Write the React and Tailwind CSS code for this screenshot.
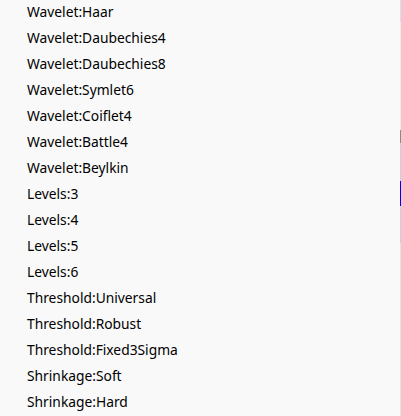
const items = [
  'Wavelet:Haar',
  'Wavelet:Daubechies4',
  'Wavelet:Daubechies8',
  'Wavelet:Symlet6',
  'Wavelet:Coiflet4',
  'Wavelet:Battle4',
  'Wavelet:Beylkin',
  'Levels:3',
  'Levels:4',
  'Levels:5',
  'Levels:6',
  'Threshold:Universal',
  'Threshold:Robust',
  'Threshold:Fixed3Sigma',
  'Shrinkage:Soft',
  'Shrinkage:Hard',
]

export default function App() {
  return (
    <div className="w-[401px] h-[416px] bg-[#f9f9f9] flex overflow-hidden">
      {/* menu list */}
      <div className="flex-1 -mt-px">
        {items.map((label) => (
          <div
            key={label}
            className="h-[26px] flex items-center pl-[27px] text-[13.8px] text-black"
            style={{ fontFamily: '"Noto Sans", "Open Sans", sans-serif' }}
          >
            {label}
          </div>
        ))}
      </div>

      {/* scrollbar edge */}
      <div className="w-px flex flex-col">
        <div className="h-[22px] bg-[#cfe5e8]" />
        <div className="h-[108px] bg-[#ececec]" />
        <div className="h-[13px] bg-[#8a8a8a]" />
        <div className="h-[38px] bg-[#c9d3de]" />
        <div className="h-[25px] bg-[#0000ff]" />
        <div className="h-[37px] bg-[#c9d3de]" />
        <div className="flex-1 bg-[#e4e4e4]" />
      </div>
    </div>
  )
}
